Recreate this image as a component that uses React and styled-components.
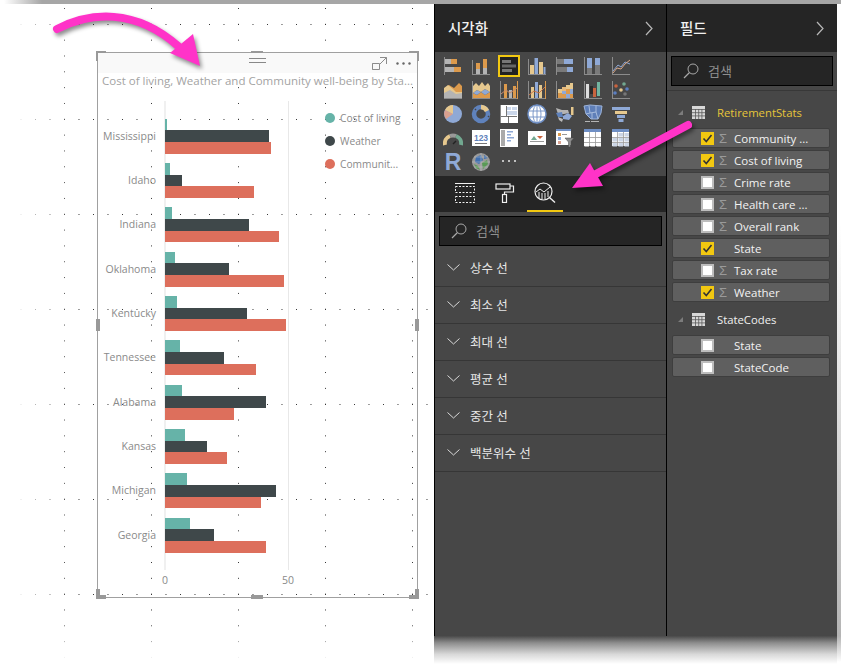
import React from "react";
import styled, { createGlobalStyle } from "styled-components";

const GlobalStyle = createGlobalStyle`
    html, body {
        margin: 0;
        padding: 0;
        background: #ffffff;
    }
    body {
        font-family: "Open Sans", "Noto Sans CJK KR", sans-serif;
        width: 841px;
        height: 669px;
        overflow: hidden;
    }
`;

const KOREAN = `"Noto Sans", "Noto Sans CJK KR", sans-serif`;
const TEAL = "#66b3a8";
const SLATE = "#3f484a";
const CORAL = "#dd6f5c";
const YELLOW = "#f2c811";
const PINK = "#ff33c8";
const ORANGE = "#dc9a4c";
const TAN = "#e6c88e";
const BLUE = "#8fa9d6";
const GREY = "#b4b4b4";
const AXIS = "#8c8c8c";

//Page frame
const Page = styled.div`
    position: relative;
    width: 841px;
    height: 669px;
    display: flex;
    flex-direction: column;
    overflow: hidden;
`;

const TopStrip = styled.div`
    height: 4px;
    flex: none;
    background: linear-gradient(to right, #ffffff 4px, #a6a6a6 42px);
`;

const Body = styled.div`
    flex: 1;
    display: flex;
    min-height: 0;
`;

const Canvas = styled.div`
    flex: none;
    width: 434px;
    box-sizing: border-box;
    padding: 48px 0 0 97px;
    background-color: #ffffff;
    background-image:
        linear-gradient(to right, #ffffff 12px, rgba(255, 255, 255, 0) 75px),
        linear-gradient(to top, #ffffff 8px, rgba(255, 255, 255, 0) 50px),
        radial-gradient(circle at 0.5px 0.5px, #333333 0.75px, transparent 0.75px),
        radial-gradient(circle at 0.5px 0.5px, #333333 0.75px, transparent 0.75px);
    background-size: auto, auto, 87px 15.83px, 14.5px 95px;
    background-position: 0 0, 0 0, 64px 4px, 6px 20px;
    background-repeat: no-repeat, no-repeat, repeat, repeat;
`;

const Side = styled.div`
    flex: none;
    width: 403px;
    display: flex;
    flex-direction: column;
`;

const Panels = styled.div`
    height: 632px;
    flex: none;
    display: flex;
    background: #000000;
    gap: 1px;
    padding-left: 1px;
`;

const BottomFade = styled.div`
    height: 28px;
    flex: none;
    background: linear-gradient(to bottom, #4a4a4a, #8e8e8e 25%, #d8d8d8 65%, #ffffff);
`;

const RightEdge = styled.div`
    flex: 1;
    height: 660px;
    background: linear-gradient(to bottom, #ffffff 220px, #b4b4b4 632px, #ffffff 658px);
`;

//Visual card
const Card = styled.div`
    position: relative;
    width: 321px;
    height: 546px;
    box-sizing: border-box;
    border: 1px solid #a0a0a0;
    color: #8a8a8a;
    font-size: 10.5px;
`;

const Handle = styled.span`
    position: absolute;
    box-sizing: border-box;
    ${(p) => (p.$corner ? `
        width: 10px;
        height: 10px;
        border-${p.$v}: 4px solid #999999;
        border-${p.$h}: 4px solid #999999;
        ${p.$v}: -2px;
        ${p.$h}: -2px;
    ` : p.$h ? `
        width: 4px;
        height: 12px;
        background: #999999;
        ${p.$h}: -2px;
        top: 266px;
    ` : `
        width: 12px;
        height: 4px;
        background: #999999;
        ${p.$v}: -2px;
        left: 153px;
    `)}
`;

const CardTop = styled.div`
    height: 20px;
    background: #f9f9f9;
    display: flex;
    align-items: center;
    position: relative;
    justify-content: flex-end;
    padding-right: 6px;
    gap: 9px;
`;

const Grip = styled.span`
    position: absolute;
    left: 151px;
    top: 5px;
    width: 17px;
    height: 3px;
    border-top: 1px solid #888888;
    border-bottom: 1px solid #888888;
`;

const Title = styled.div`
    height: 16px;
    line-height: 16px;
    padding-left: 4px;
    font-size: 11.5px;
    color: #a3a3a3;
    white-space: nowrap;
`;

const ChartWrap = styled.div`
    display: flex;
    margin-top: 12px;
`;

const ChartColumn = styled.div`
    width: 227px;
    flex: none;
`;

const Plot = styled.div`
    height: 469px;
    box-sizing: border-box;
    padding: 13px 0 0 1px;
    background-image:
        linear-gradient(#f0f0f0, #f0f0f0),
        linear-gradient(#e8e8e8, #e8e8e8);
    background-size: 2px 100%, 1px 100%;
    background-position: 66px 0, 190px 0;
    background-repeat: no-repeat;
    display: grid;
    grid-auto-rows: 44.33px;
`;

const PlotRow = styled.div`
    display: flex;
    align-items: center;
`;

const PlotLabel = styled.div`
    width: 57px;
    margin-right: 9px;
    flex: none;
    padding-bottom: 1px;
    text-align: right;
    white-space: nowrap;
`;

const BarStack = styled.div`
    flex: 1;
    display: flex;
    flex-direction: column;
`;

const Bar = styled.div`
    height: 11.66px;
    background: ${(p) => p.$color};
`;

const Axis = styled.div`
    display: flex;
    margin-top: 3px;
    font-size: 10.5px;
`;

const AxisTick = styled.span`
    width: 30px;
    text-align: center;
    margin-left: ${(p) => p.$gap}px;
`;

const Legend = styled.div`
    padding-top: 9px;
    display: flex;
    flex-direction: column;
    gap: 7px;
`;

const LegendItem = styled.div`
    display: flex;
    align-items: center;
    gap: 5px;
    height: 16px;
    font-size: 10.2px;
    white-space: nowrap;
`;

const LegendDot = styled.span`
    width: 10px;
    height: 10px;
    border-radius: 50%;
    background: ${(p) => p.$color};
`;

//Dark panels
const Panel = styled.section`
    flex: none;
    width: ${(p) => p.$width}px;
    background: #474747;
    display: flex;
    flex-direction: column;
`;

const PanelHeader = styled.header`
    height: 48px;
    flex: none;
    box-sizing: border-box;
    background: #252525;
    display: flex;
    align-items: center;
    justify-content: space-between;
    padding: 0 ${(p) => p.$right}px 0 ${(p) => p.$left}px;
    color: #f0f0f0;
    font-family: ${KOREAN};
    font-size: 14.5px;
    font-weight: 500;
`;

const HeaderLabel = styled.span`
    margin-top: -2px;
`;

const IconGrid = styled.div`
    height: 124px;
    flex: none;
    box-sizing: border-box;
    padding: 2px 0 0 4px;
    display: grid;
    grid-template-columns: repeat(7, 28px);
    grid-auto-rows: 24px;
`;

const IconCell = styled.div`
    display: flex;
    align-items: center;
    justify-content: center;
`;

const RLetter = styled.span`
    font-family: "Liberation Sans", sans-serif;
    font-weight: 700;
    font-size: 23px;
    line-height: 24px;
    color: ${BLUE};
`;

const TabBar = styled.div`
    height: 36px;
    flex: none;
    background: #252525;
    display: flex;
    padding-left: 10px;
`;

const Tab = styled.div`
    position: relative;
    width: 40px;
    display: flex;
    align-items: center;
    justify-content: center;
    padding-bottom: 3px;
    box-sizing: border-box;
    ${(p) => p.$active && `
        &::after {
            content: "";
            position: absolute;
            left: 2px;
            right: 2px;
            bottom: 0;
            height: 2px;
            background: ${YELLOW};
        }
    `}
`;

const SearchBox = styled.div`
    height: 30px;
    box-sizing: border-box;
    flex: none;
    margin: ${(p) => p.$top}px ${(p) => p.$right}px 0 ${(p) => p.$left}px;
    background: #252525;
    border: 1px solid #000000;
    display: flex;
    align-items: center;
    gap: 9px;
    padding: 0 0 1px 11px;
    color: #8e8e8e;
    font-family: ${KOREAN};
    font-size: 13px;
`;

const Accordion = styled.div`
    margin-top: 4px;
`;

const AccordionRow = styled.div`
    height: 37px;
    box-sizing: border-box;
    border-bottom: 1px solid #363636;
    display: flex;
    align-items: center;
    gap: 10px;
    padding: 0 0 2px 12px;
    color: #e6e6e6;
    font-family: ${KOREAN};
    font-size: 12.5px;
`;

const FieldDivider = styled.div`
    height: 1px;
    flex: none;
    background: #383838;
    margin-top: 4px;
`;

const FieldTree = styled.div`
    padding: 7px 7px 0 5px;
`;

const TableHeader = styled.div`
    height: 30px;
    box-sizing: border-box;
    display: flex;
    align-items: center;
    padding: 0 0 1px 6px;
    margin-top: ${(p) => (p.$first ? 0 : 3)}px;
    font-size: 11.3px;
    color: ${(p) => (p.$active ? "#e6c53a" : "#f0f0f0")};
`;

const Caret = styled.span`
    width: 0;
    height: 0;
    border-left: 5px solid transparent;
    border-bottom: 5px solid #7c7c7c;
    margin-right: 9px;
`;

const TableName = styled.span`
    margin-left: 12px;
`;

const FieldList = styled.div`
    display: flex;
    flex-direction: column;
    gap: 2px;
`;

const FieldRow = styled.div`
    height: 20px;
    box-sizing: border-box;
    background: #5f5f5f;
    border: 1px solid #3e3e3e;
    border-radius: 2px;
    display: flex;
    align-items: center;
    padding-left: 28px;
    color: #f2f2f2;
    font-size: 11.5px;
    white-space: nowrap;
`;

const CheckBox = styled.span`
    width: 13px;
    height: 13px;
    flex: none;
    box-sizing: border-box;
    display: flex;
    align-items: center;
    justify-content: center;
    background: ${(p) => (p.$checked ? YELLOW : "#ffffff")};
    border: ${(p) => (p.$checked ? "none" : "2px solid #bdbdbd")};
`;

const Sigma = styled.span`
    width: 10px;
    margin: 0 6px 0 4px;
    flex: none;
    font-family: "Liberation Sans", sans-serif;
    font-size: 13px;
    color: #9a9a9a;
    text-align: center;
    visibility: ${(p) => (p.$hidden ? "hidden" : "visible")};
`;

//Pink arrows lying over everything
const ArrowLayer = styled.svg`
    position: absolute;
    left: 0;
    top: 0;
    width: 841px;
    height: 669px;
    pointer-events: none;
    filter: drop-shadow(2px 3px 2px rgba(0, 0, 0, 0.45));
`;

const Glyph = ({ children, size = 20 }) => (
    <svg width={size} height={size} viewBox="0 0 20 20">{children}</svg>
);

const R = ({ x, y, w, h, c }) => <rect x={x} y={y} width={w} height={h} fill={c} />;

const AxisL = ({ bottom = true, left = true }) => (
    <>
        {left && <R x={1} y={1} w={1} h={18} c={AXIS} />}
        {bottom && <R x={1} y={18} w={18} h={1} c={AXIS} />}
    </>
);

const GridTable = ({ matrix }) => (
    <>
        <R x={1} y={1} w={17} h={17} c="#ffffff" />
        <R x={1} y={1} w={17} h={3} c="#6f8fc4" />
        {[5, 10, 15].map((y) =>
            [1, 7, 13].map((x) => (
                <R key={`${x}-${y}`} x={x + 0.5} y={y} w={4.5} h={3.5} c={matrix && (x > 1 || y > 5) ? "#ccd6e6" : "#ffffff"} />
            ))
        )}
        <R x={1} y={9} w={17} h={0.8} c="#9a9a9a" />
        <R x={1} y={14} w={17} h={0.8} c="#9a9a9a" />
        <R x={6} y={4} w={0.8} h={14} c="#9a9a9a" />
        <R x={12} y={4} w={0.8} h={14} c="#9a9a9a" />
    </>
);

//The visualisation gallery, row by row
const galleryIcons = [
    <Glyph key="g1"><AxisL bottom={false} /><R x={2} y={3} w={6} h={5} c={GREY} /><R x={8} y={3} w={6} h={5} c={ORANGE} /><R x={2} y={11} w={9} h={5} c={GREY} /><R x={11} y={11} w={7} h={5} c={ORANGE} /></Glyph>,
    <Glyph key="g2"><R x={1} y={18} w={18} h={1} c={AXIS} /><R x={1} y={4} w={1} h={15} c={AXIS} /><R x={5} y={13} w={4} h={5} c={GREY} /><R x={5} y={7} w={4} h={6} c={ORANGE} /><R x={12} y={12} w={4} h={6} c={GREY} /><R x={12} y={3} w={4} h={9} c={ORANGE} /></Glyph>,
    <svg key="g3" width="22" height="22" viewBox="0 0 22 22"><rect x="1" y="1" width="20" height="20" fill="#222222" stroke={YELLOW} strokeWidth="2" /><R x={4} y={5} w={9} h={3} c="#777777" /><R x={4} y={9.5} w={14} h={3} c="#666666" /><R x={4} y={14} w={10} h={3} c="#777777" /></svg>,
    <Glyph key="g4"><R x={1} y={18} w={18} h={1} c={AXIS} /><R x={1} y={3} w={1} h={15} c={AXIS} /><R x={3} y={9} w={4} h={9} c={TAN} /><R x={7.5} y={2} w={3.5} h={16} c={BLUE} /><R x={12} y={6} w={4} h={12} c={TAN} /><R x={16.5} y={11} w={2} h={7} c={BLUE} /></Glyph>,
    <Glyph key="g5"><AxisL bottom={false} /><R x={2} y={3} w={7} h={5} c="#7a7a7a" /><R x={9} y={3} w={9} h={5} c={BLUE} /><R x={2} y={11} w={10} h={5} c="#7a7a7a" /><R x={12} y={11} w={6} h={5} c={BLUE} /></Glyph>,
    <Glyph key="g6"><R x={1} y={18} w={18} h={1} c={AXIS} /><R x={1} y={1} w={1} h={18} c={AXIS} /><R x={4} y={12} w={5} h={6} c="#7a7a7a" /><R x={4} y={2} w={5} h={10} c={BLUE} /><R x={12} y={9} w={5} h={9} c="#7a7a7a" /><R x={12} y={2} w={5} h={7} c={BLUE} /></Glyph>,
    <Glyph key="g7"><AxisL /><polyline points="2,15 7,9 10,11 14,6 19,8" fill="none" stroke={BLUE} strokeWidth="1" /><polyline points="2,17 6,12 10,13 14,8 19,4" fill="none" stroke="#d9a887" strokeWidth="1" /></Glyph>,

    <Glyph key="g8"><polygon points="1,18 1,9 6,5 11,8 16,3 19,6 19,18" fill={ORANGE} /><polygon points="1,18 1,8 5,5 10,9 13,12 19,12 19,18" fill={TAN} /><polygon points="1,18 1,13 7,10 13,14 19,13 19,18" fill={GREY} /><R x={1} y={18} w={18} h={1} c={AXIS} /></Glyph>,
    <Glyph key="g9"><AxisL /><polygon points="2,18 2,13 6,15 10,12 14,15 19,12 19,18" fill={ORANGE} /><polygon points="2,13 6,10 10,12 14,9 19,12 14,15 10,12 6,15" fill={BLUE} /><polygon points="2,13 2,6 5,3 8,6 11,2 14,6 17,3 19,6 19,12 14,9 10,12 6,10" fill={TAN} /></Glyph>,
    <Glyph key="g10"><AxisL bottom /><R x={18} y={1} w={1} h={18} c={ORANGE} /><R x={5} y={4} w={3} h={14} c={ORANGE} /><R x={10} y={10} w={3} h={8} c={GREY} /><R x={14} y={6} w={3} h={12} c={ORANGE} /><polyline points="2,14 7,10 11,13 18,8" fill="none" stroke="#c98a6a" strokeWidth="1" /></Glyph>,
    <Glyph key="g11"><AxisL bottom /><R x={18} y={1} w={1} h={18} c={ORANGE} /><R x={4} y={7} w={3} h={11} c={TAN} /><R x={8} y={2} w={3} h={16} c={BLUE} /><R x={12} y={5} w={3} h={13} c={TAN} /><polyline points="2,15 7,11 12,13 18,7" fill="none" stroke="#c9764a" strokeWidth="1" /></Glyph>,
    <Glyph key="g12"><AxisL /><R x={3} y={9} w={4} h={4} c={TAN} /><R x={3} y={13} w={4} h={5} c={ORANGE} /><R x={7} y={7} w={4} h={4} c="#e6b87a" /><R x={7} y={11} w={4} h={3} c={BLUE} /><R x={7} y={14} w={4} h={4} c={ORANGE} /><R x={11} y={5} w={4} h={4} c={TAN} /><R x={11} y={9} w={4} h={5} c={ORANGE} /><R x={11} y={14} w={4} h={4} c={BLUE} /><R x={15} y={3} w={3} h={6} c={TAN} /><R x={15} y={9} w={3} h={5} c={BLUE} /><R x={15} y={14} w={3} h={4} c={ORANGE} /></Glyph>,
    <Glyph key="g13"><AxisL /><R x={3} y={4} w={3} h={14} c="#dddddd" /><R x={7} y={6} w={3} h={8} c="#2a2a2a" /><R x={10} y={8} w={3} h={9} c="#c7643f" /><R x={14} y={2} w={3} h={14} c="#72b39f" /></Glyph>,
    <Glyph key="g14"><AxisL /><circle cx="5" cy="6" r="1.8" fill="#c9643f" /><circle cx="13" cy="4" r="1.8" fill="#72a890" /><circle cx="4" cy="13" r="1.8" fill="#5c7fc0" /><circle cx="10" cy="10" r="1.8" fill={TAN} /><circle cx="16" cy="9" r="1.8" fill="#5c7fc0" /><circle cx="14" cy="14" r="1.8" fill="#777777" /></Glyph>,

    <Glyph key="g15"><circle cx="10" cy="10" r="9" fill={BLUE} /><path d="M10 10 L10 1 A9 9 0 0 0 2 6 Z" fill={TAN} /><path d="M10 10 L2 6 A9 9 0 0 0 3 15 Z" fill="#d9a08e" /></Glyph>,
    <Glyph key="g16"><circle cx="10" cy="10" r="7" fill="none" stroke="#5f82bc" strokeWidth="4.5" /><path d="M10 3 A7 7 0 0 1 16 7" fill="none" stroke={TAN} strokeWidth="4.5" /><path d="M4 6 L5 5" stroke="#474747" strokeWidth="1.5" /><path d="M17 12 L18 13" stroke="#474747" strokeWidth="1.5" /></Glyph>,
    <Glyph key="g17"><R x={1} y={1} w={18} h={18} c="#ffffff" /><R x={1} y={1} w={1} h={18} c="#888888" /><R x={2} y={2} w={5} h={10} c="#ffffff" /><R x={8} y={3} w={4} h={3} c="#cbd7ea" /><R x={13} y={3} w={5} h={3} c="#cbd7ea" /><R x={8} y={7} w={10} h={4} c="#cbd7ea" /><R x={2} y={12} w={16} h={0.8} c="#555555" /><R x={9} y={12} w={0.8} h={7} c="#555555" /><R x={7} y={2} w={0.8} h={10} c="#555555" /></Glyph>,
    <Glyph key="g18"><circle cx="10" cy="10" r="9" fill="#ffffff" stroke="#6f8fc4" strokeWidth="1.5" /><ellipse cx="10" cy="10" rx="4" ry="9" fill="none" stroke="#6f8fc4" strokeWidth="0.9" /><path d="M1 7 H19 M1 13 H19 M10 1 V19" stroke="#6f8fc4" strokeWidth="0.9" /></Glyph>,
    <Glyph key="g19"><polygon points="1,4 7,6 13,6 14,9 9,10 3,10" fill={GREY} /><polygon points="1,9 7,8 8,13 3,13" fill="#5f82bc" /><polygon points="8,12 13,9 17,12 14,16 8,15" fill={BLUE} /><polygon points="3,13 8,15 7,18 4,16" fill="#bbbbbb" /><R x={16} y={3} w={2.5} h={8} c={TAN} /></Glyph>,
    <Glyph key="g20"><polygon points="1,2 7,1 19,2 18,9 15,15 8,15 3,10" fill="#5f7fb8" stroke="#9db4da" strokeWidth="1" /><path d="M6 2 L7 9 L3 10 M7 9 L13 8 L13 2 M13 8 L15 15 M9 9 L9 15" fill="none" stroke="#a8bcdd" strokeWidth="1" /><R x={2} y={17} w={5} h={1} c={GREY} /><R x={8} y={17} w={8} h={1} c={GREY} /></Glyph>,
    <Glyph key="g21"><R x={1} y={3} w={18} h={3} c={BLUE} /><R x={4} y={7} w={12} h={3} c={TAN} /><R x={6} y={11} w={8} h={3} c={BLUE} /><R x={7.5} y={15} w={5} h={3} c={BLUE} /></Glyph>,

    <Glyph key="g22"><path d="M2 17 A8 8 0 0 1 7 8" fill="none" stroke={TAN} strokeWidth="4" /><path d="M7 8 A8 8 0 0 1 13 8" fill="none" stroke="#999999" strokeWidth="4" /><path d="M13 8 A8 8 0 0 1 18 17" fill="none" stroke="#72a890" strokeWidth="4" /><path d="M10 16 L13 13" stroke="#222222" strokeWidth="1.5" /></Glyph>,
    <svg key="g23" width="20" height="20" viewBox="0 0 20 20"><R x={1} y={2} w={18} h={16} c="#ffffff" /><text x="10" y="12.5" textAnchor="middle" fontFamily="Liberation Sans, sans-serif" fontSize="8.5" fontWeight="700" fill="#5f82bc">123</text><R x={4} y={15} w={12} h={1} c="#777777" /></svg>,
    <Glyph key="g24"><R x={1} y={1} w={18} h={18} c="#ffffff" /><R x={2} y={2} w={4} h={16} c="#aaaaaa" /><R x={8} y={3} w={6} h={1.5} c="#8fa9d6" /><R x={8} y={6} w={4} h={1.5} c="#8fa9d6" /><R x={8} y={9} w={7} h={1.5} c="#8fa9d6" /><R x={8} y={12} w={4} h={1.5} c="#8fa9d6" /></Glyph>,
    <Glyph key="g25"><R x={1} y={3} w={18} h={14} c="#ffffff" /><polygon points="4,12 7,8 10,12" fill="#72a890" /><polygon points="10,8 16,8 13,11" fill="#c9643f" /><R x={3} y={13} w={14} h={1} c="#999999" /></Glyph>,
    <Glyph key="g26"><R x={1} y={1} w={15} h={16} c="#ffffff" /><R x={1} y={1} w={15} h={2} c="#6f8fc4" /><R x={3} y={5} w={3} h={3} c={ORANGE} /><R x={3} y={9} w={3} h={3} c={BLUE} /><R x={3} y={13} w={3} h={3} c="#d9a08e" /><R x={7} y={6} w={5} h={1} c="#999999" /><polygon points="10,10 19,10 15.5,14 15.5,19 13.5,19 13.5,14" fill="#8c8c8c" stroke="#474747" strokeWidth="0.5" /></Glyph>,
    <Glyph key="g27"><GridTable /></Glyph>,
    <Glyph key="g28"><GridTable matrix /></Glyph>,

    <RLetter key="g29">R</RLetter>,
    <Glyph key="g30"><circle cx="10" cy="10" r="9" fill="#999999" /><path d="M5 5 L10 3 L12 8 L8 12 L4 10 Z" fill="#3f6fb0" /><path d="M11 11 L16 8 L17 12 L12 17 Z" fill="#5a9a56" /><path d="M3 12 L7 14 L9 18 L5 16 Z" fill="#5a9a56" /><path d="M13 3 L17 6 L13 7 Z" fill="#3f6fb0" /><path d="M1 10 H19 M10 1 V19 M3 5 H17 M3 15 H17" stroke="#c4c4c4" strokeWidth="0.5" /></Glyph>,
    <Glyph key="g31"><circle cx="4" cy="9" r="1" fill="#e8e8e8" /><circle cx="10" cy="9" r="1" fill="#e8e8e8" /><circle cx="16" cy="9" r="1" fill="#e8e8e8" /></Glyph>,
];

const FieldsTabIcon = () => (
    <svg width="22" height="20" viewBox="0 0 22 20" fill="none" stroke="#f0f0f0">
        <path d="M1 0.5 H21" />
        <rect x="1.5" y="3.5" width="19" height="6" strokeDasharray="2 1.5" />
        <rect x="1.5" y="13.5" width="19" height="6" strokeDasharray="2 1.5" />
    </svg>
);

const FormatTabIcon = () => (
    <svg width="20" height="20" viewBox="0 0 20 20" fill="none" stroke="#f0f0f0" strokeWidth="1.2">
        <rect x="1" y="1" width="14" height="5" />
        <path d="M15 3 H18.5 V9 H9.5 V11" />
        <rect x="7.5" y="11.5" width="4" height="8" />
    </svg>
);

const AnalyticsTabIcon = () => (
    <svg width="22" height="22" viewBox="0 0 22 22" fill="none" stroke="#f0f0f0" strokeWidth="1">
        <circle cx="9.5" cy="9.5" r="8.5" strokeWidth="1.2" />
        <path d="M15.5 15.5 L21 20.5" strokeWidth="1.4" />
        <path d="M2 10 L6 7 L10 10 L16 5" />
        <path d="M5 10 V16 M8 11 V17 M11 11 V17 M14 9 V15" />
    </svg>
);

const Magnifier = () => (
    <svg width="16" height="16" viewBox="0 0 16 16" fill="none" stroke="#a8a8a8" strokeWidth="1">
        <circle cx="10" cy="6" r="5" />
        <path d="M6.5 9.5 L1 15" strokeWidth="1.3" />
    </svg>
);

const Chevron = () => (
    <svg width="8" height="15" viewBox="0 0 8 15" fill="none" stroke="#b8b8b8" strokeWidth="1.2">
        <path d="M1 1 L7 7.5 L1 14" />
    </svg>
);

const ChevronDown = () => (
    <svg width="13" height="7" viewBox="0 0 13 7" fill="none" stroke="#d8d8d8" strokeWidth="1">
        <path d="M0.5 0.5 L6.5 6 L12.5 0.5" />
    </svg>
);

const TableIcon = () => (
    <svg width="13" height="13" viewBox="0 0 13 13">
        <rect width="13" height="13" fill="#d8d8d8" />
        <path d="M0 3.5 H13 M0 6.7 H13 M0 9.9 H13 M3.5 3 V13 M6.7 3 V13 M9.9 3 V13" stroke="#5a5a5a" strokeWidth="0.8" />
    </svg>
);

const Check = () => (
    <svg width="11" height="11" viewBox="0 0 11 11" fill="none" stroke="#333333" strokeWidth="1.6">
        <path d="M1.5 5.5 L4.3 8.5 L9.5 2" />
    </svg>
);

const FocusIcon = () => (
    <svg width="15" height="13" viewBox="0 0 15 13" fill="none" stroke="#8c8c8c">
        <path d="M8 0.5 H14.5 V7 M14.5 0.5 L8 7 M0.5 6.5 H7.5 V12.5 H0.5 Z M0.5 6.5 V12.5" />
    </svg>
);

const MoreIcon = () => (
    <svg width="15" height="3" viewBox="0 0 15 3" fill="#666666">
        <circle cx="1.5" cy="1.5" r="1.2" />
        <circle cx="7.5" cy="1.5" r="1.2" />
        <circle cx="13.5" cy="1.5" r="1.2" />
    </svg>
);

const states = [
    ["Mississippi", 1, 42, 43],
    ["Idaho", 2, 7, 36],
    ["Indiana", 3, 34, 46],
    ["Oklahoma", 4, 26, 48],
    ["Kentucky", 5, 33, 49],
    ["Tennessee", 6, 24, 37],
    ["Alabama", 7, 41, 28],
    ["Kansas", 8, 17, 25],
    ["Michigan", 9, 45, 39],
    ["Georgia", 10, 20, 41],
];

const legend = [
    ["Cost of living", TEAL],
    ["Weather", SLATE],
    ["Communit...", CORAL],
];

const analytics = ["상수 선", "최소 선", "최대 선", "평균 선", "중간 선", "백분위수 선"];

const retirementFields = [
    ["Community ...", true, true],
    ["Cost of living", true, true],
    ["Crime rate", false, true],
    ["Health care ...", false, true],
    ["Overall rank", false, true],
    ["State", true, false],
    ["Tax rate", false, true],
    ["Weather", true, true],
];

const codeFields = [
    ["State", false, false],
    ["StateCode", false, false],
];

const UNIT = 2.47;

const Field = ({ name, checked, sum }) => (
    <FieldRow>
        <CheckBox $checked={checked}>{checked && <Check />}</CheckBox>
        <Sigma $hidden={!sum}>Σ</Sigma>
        {name}
    </FieldRow>
);

const App = () => (
    <Page>
        <GlobalStyle />
        <TopStrip />
        <Body>
            <Canvas>
                <Card>
                    <Handle $corner $v="top" $h="left" />
                    <Handle $corner $v="top" $h="right" />
                    <Handle $corner $v="bottom" $h="left" />
                    <Handle $corner $v="bottom" $h="right" />
                    <Handle $v="top" />
                    <Handle $v="bottom" />
                    <Handle $h="left" />
                    <Handle $h="right" />
                    <CardTop>
                        <Grip />
                        <FocusIcon />
                        <MoreIcon />
                    </CardTop>
                    <Title>Cost of living, Weather and Community well-being by Sta...</Title>
                    <ChartWrap>
                        <ChartColumn>
                            <Plot>
                                {states.map(([name, cost, weather, community]) => (
                                    <PlotRow key={name}>
                                        <PlotLabel>{name}</PlotLabel>
                                        <BarStack>
                                            <Bar $color={TEAL} style={{ width: cost * UNIT }} />
                                            <Bar $color={SLATE} style={{ width: weather * UNIT }} />
                                            <Bar $color={CORAL} style={{ width: community * UNIT }} />
                                        </BarStack>
                                    </PlotRow>
                                ))}
                            </Plot>
                            <Axis>
                                <AxisTick $gap={52}>0</AxisTick>
                                <AxisTick $gap={93}>50</AxisTick>
                            </Axis>
                        </ChartColumn>
                        <Legend>
                            {legend.map(([name, color]) => (
                                <LegendItem key={name}>
                                    <LegendDot $color={color} />
                                    {name}
                                </LegendItem>
                            ))}
                        </Legend>
                    </ChartWrap>
                </Card>
            </Canvas>
            <Side>
                <Panels>
                    <Panel $width={231}>
                        <PanelHeader $left={13} $right={13}>
                            <HeaderLabel>시각화</HeaderLabel>
                            <Chevron />
                        </PanelHeader>
                        <IconGrid>
                            {galleryIcons.map((icon) => (
                                <IconCell key={icon.key}>{icon}</IconCell>
                            ))}
                        </IconGrid>
                        <TabBar>
                            <Tab><FieldsTabIcon /></Tab>
                            <Tab><FormatTabIcon /></Tab>
                            <Tab $active><AnalyticsTabIcon /></Tab>
                        </TabBar>
                        <SearchBox $top={4} $left={4} $right={4}>
                            <Magnifier />
                            검색
                        </SearchBox>
                        <Accordion>
                            {analytics.map((label) => (
                                <AccordionRow key={label}>
                                    <ChevronDown />
                                    {label}
                                </AccordionRow>
                            ))}
                        </Accordion>
                    </Panel>
                    <Panel $width={170}>
                        <PanelHeader $left={13} $right={13}>
                            <HeaderLabel>필드</HeaderLabel>
                            <Chevron />
                        </PanelHeader>
                        <SearchBox $top={4} $left={4} $right={4}>
                            <Magnifier />
                            검색
                        </SearchBox>
                        <FieldDivider />
                        <FieldTree>
                            <TableHeader $first $active>
                                <Caret />
                                <TableIcon />
                                <TableName>RetirementStats</TableName>
                            </TableHeader>
                            <FieldList>
                                {retirementFields.map(([name, checked, sum]) => (
                                    <Field key={name} name={name} checked={checked} sum={sum} />
                                ))}
                            </FieldList>
                            <TableHeader>
                                <Caret />
                                <TableIcon />
                                <TableName>StateCodes</TableName>
                            </TableHeader>
                            <FieldList>
                                {codeFields.map(([name, checked, sum]) => (
                                    <Field key={name} name={name} checked={checked} sum={sum} />
                                ))}
                            </FieldList>
                        </FieldTree>
                    </Panel>
                </Panels>
                <BottomFade />
            </Side>
            <RightEdge />
        </Body>
        <ArrowLayer viewBox="0 0 841 669">
            <path d="M57 29 C 90 12, 135 8, 178 46" fill="none" stroke={PINK} strokeWidth="8" strokeLinecap="round" />
            <polygon points="200,66 170,53 193,34" fill={PINK} />
            <path d="M688 125 L594 175" fill="none" stroke={PINK} strokeWidth="8" strokeLinecap="round" />
            <polygon points="572,188 590,163 603,186" fill={PINK} />
        </ArrowLayer>
    </Page>
);

export default App;
